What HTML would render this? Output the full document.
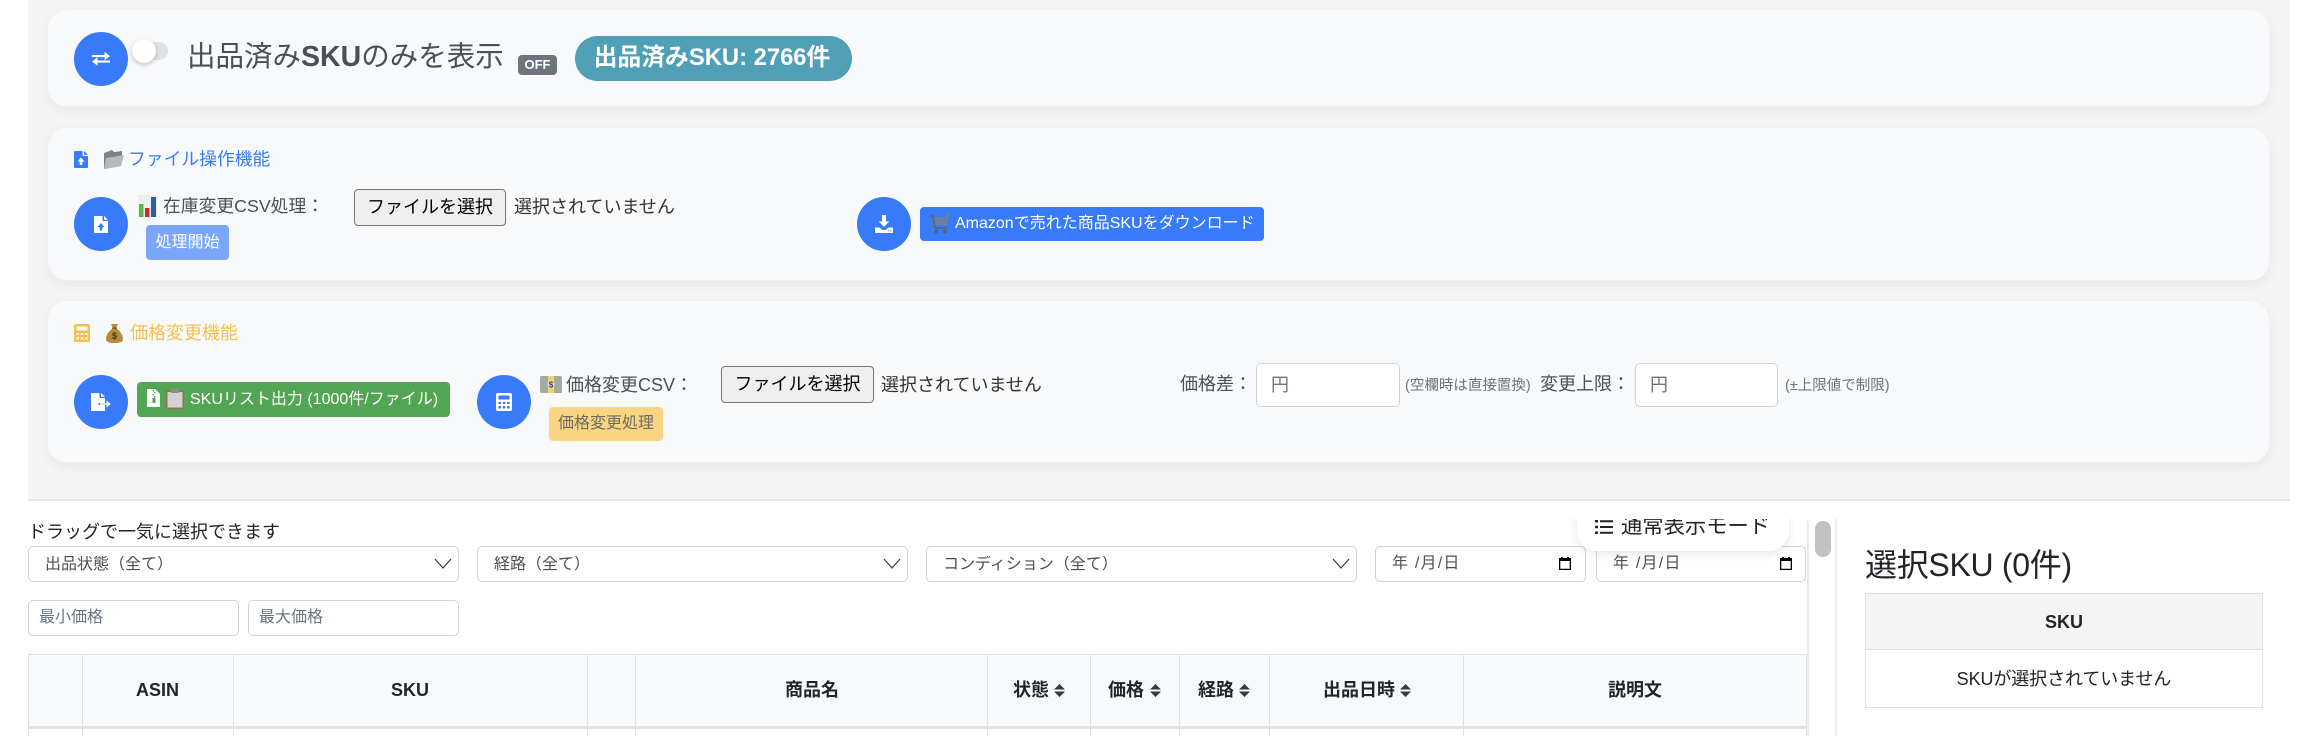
<!DOCTYPE html>
<html lang="ja"><head><meta charset="utf-8"><title>SKU</title>
<style>
*{box-sizing:border-box}
html,body{margin:0;padding:0;background:#fff;width:2318px;height:736px;overflow:hidden}
body{font-family:"Liberation Sans","Noto Sans CJK JP",sans-serif;color:#212529;position:relative}
.a{position:absolute;white-space:nowrap}
.bg{left:28px;top:0;width:2262px;height:501px;background:#f4f4f5;border-bottom:2px solid #e4e5e7}
.card{left:47px;width:2223px;background:#f8f9fb;border-radius:20px;border:1px solid #f0f1f3;box-shadow:0 4px 12px rgba(0,0,0,.05)}
.c{width:54px;height:54px;border-radius:50%;background:#387bfa}
.c svg,.ic{position:absolute}
.t{line-height:24px;height:24px;font-size:18px;color:#495057}
.fb{height:37px;background:#efefef;border:1px solid #767676;border-radius:4px;font:18px/35px "Liberation Sans","Noto Sans CJK JP",sans-serif;color:#000;padding:0;text-align:center}
.btn{border-radius:4px;color:#fff;font-size:16px;line-height:24px;text-align:center}
.inp{background:#fff;border:1px solid #ced4da;border-radius:5px;font:16px "Liberation Sans","Noto Sans CJK JP",sans-serif;color:#495057;outline:0}
.inp::placeholder{color:#6c757d;opacity:1}
.sm{font-size:14.500px;line-height:20px;color:#6c757d}
select.inp{appearance:none;-webkit-appearance:none;padding:0 0 0 16px;height:36px}
.tv{width:1px;top:654px;height:82px;background:#dee2e6}
.th{top:678px;line-height:24px;font-size:18px;font-weight:700;color:#212529}
</style></head><body>
<div class="a bg"></div>

<!-- card 1 -->
<div class="a card" style="top:9px;height:98px"></div>
<div class="a c" style="left:74px;top:32px"><svg style="left:18px;top:20px" width="18" height="14" viewBox="0 0 18 14" fill="#fff"><path d="M0 3.2h12.5V0L18 4.3l-5.500 4.200V5.300H0zM18 10.800H5.500V14L0 9.700l5.500-4.200v3.200H18z" transform="translate(0 -.2)"/></svg></div>
<div class="a" style="left:132px;top:42px;width:36px;height:18px;border-radius:9px;background:#dee2e6"></div>
<div class="a" style="left:132px;top:39px;width:24px;height:24px;border-radius:50%;background:#fff;box-shadow:0 2px 5px rgba(0,0,0,.22)"></div>
<div class="a" style="left:187px;top:38px;font-size:28.500px;line-height:38px;color:#495057">出品済み<b style="font-weight:700">SKU</b>のみを表示</div>
<div class="a" style="left:518px;top:55px;width:39px;height:20px;background:#6c757d;border-radius:4px;color:#fff;font-size:13px;font-weight:700;line-height:20px;text-align:center">OFF</div>
<div class="a" style="left:575px;top:36px;width:277px;height:45px;border-radius:23px;background:#4f9fb6;color:#fff;font-size:23.800px;font-weight:700;line-height:44px;text-align:center;padding-right:3px">出品済みSKU: 2766件</div>

<!-- card 2 -->
<div class="a card" style="top:127px;height:154px"></div>
<svg class="ic" style="left:74px;top:151px" width="14" height="17" viewBox="0 0 14 17"><path fill="#387bfa" d="M1 0h7.500v5H14v11a1 1 0 0 1-1 1H1a1 1 0 0 1-1-1V1a1 1 0 0 1 1-1zM10 0l4 3.800H10z"/><path fill="#fff" d="M7 6.500l3.500 4H8.300V14H5.700v-3.500H3.500z"/></svg>
<svg class="ic" style="left:102px;top:150px" width="22" height="19" viewBox="0 0 22 19"><path fill="#7d8288" d="M2 3l8-3 2 2 8-1v5L4 18l-2 1z"/><path fill="#b6babf" d="M4 8l18-3-3 11-15 3-2 0z"/></svg>
<div class="a t" style="left:128px;top:147px;color:#387bfa;font-size:17.800px">ファイル操作機能</div>

<div class="a c" style="left:74px;top:197px"><svg style="left:20px;top:19px" width="14" height="17" viewBox="0 0 14 17"><path fill="#fff" d="M0 0h8.500v5H14v12H0zM10 0l4 3.800H10z"/><path fill="#387bfa" d="M7 7l3.500 4H8.300v3.500H5.700V11H3.500z"/></svg></div>
<svg class="ic" style="left:138px;top:195px" width="19" height="22" viewBox="0 0 19 22"><rect width="19" height="22" fill="#eceded"/><rect x="1" y="9" width="4.500" height="13" fill="#5cb84a"/><rect x="7" y="13" width="4.500" height="9" fill="#c3322a"/><rect x="13" y="2" width="5" height="20" fill="#2b5ea8"/></svg>
<div class="a t" style="left:163px;top:194px;font-size:17.800px">在庫変更CSV処理：</div>
<button class="a fb" style="left:354px;top:189px;width:152px">ファイルを選択</button>
<div class="a t" style="left:514px;top:195px;color:#333">選択されていません</div>
<div class="a btn" style="left:146px;top:225px;width:83px;height:35px;background:#7aa7fb;line-height:35px">処理開始</div>

<div class="a c" style="left:857px;top:197px"><svg style="left:18px;top:18px" width="18" height="18" viewBox="0 0 18 18"><path fill="#fff" d="M7 0h4v6.500h3.200L9 12 3.800 6.500H7zM0 12.500h4.500L7.500 15h3l3-2.500H18V18H0z"/><path fill="#387bfa" d="M13 15.300h1.200v1H13zM15 15.300h1.200v1H15z"/></svg></div>
<div class="a btn" style="left:920px;top:207px;width:344px;height:34px;background:#387bfa;text-align:left;padding-left:35px;line-height:33px">Amazonで売れた商品SKUをダウンロード</div>
<svg class="ic" style="left:929px;top:213px" width="21" height="21" viewBox="0 0 21 21"><path fill="#6f7f9d" d="M3 4h14l2-4h2l-3 12H4z"/><path fill="none" stroke="#59636f" stroke-width="1.500" d="M1 3h3l2 12h12"/><circle cx="7" cy="18.500" r="2" fill="#59636f"/><circle cx="16" cy="18.500" r="2" fill="#59636f"/></svg>

<!-- card 3 -->
<div class="a card" style="top:300px;height:163px"></div>
<svg class="ic" style="left:74px;top:324px" width="16" height="18" viewBox="0 0 16 18"><path fill="#f6c04d" fill-rule="evenodd" d="M2 0h12a2 2 0 0 1 2 2v14a2 2 0 0 1-2 2H2a2 2 0 0 1-2-2V2a2 2 0 0 1 2-2zM2.500 2.500v4h11v-4zM2.500 9v2h2.500V9zM6.800 9v2h2.500V9zM11 9v2h2.500V9zM2.500 13v2.500h2.500V13zM6.800 13v2.500h2.500V13zM11 13v2.500h2.500V13z"/></svg>
<svg class="ic" style="left:106px;top:324px" width="17" height="19" viewBox="0 0 17 19"><path fill="#b58a3c" d="M5 0h7l-2 4c4 3 7 7 7 11 0 3-3 4-8.500 4S0 18 0 15c0-4 3-8 7-11z"/><path fill="#6b4b12" d="M6 3.500h5v1.200H6z"/><text x="8.500" y="15" font-size="9" font-weight="700" text-anchor="middle" fill="#4a3208" font-family="Liberation Sans">$</text></svg>
<div class="a t" style="left:130px;top:321px;color:#f6c04d">価格変更機能</div>

<div class="a c" style="left:74px;top:375px"><svg style="left:17px;top:18px" width="20" height="18" viewBox="0 0 20 18"><path fill="#fff" d="M0 0h8.500v5H14v5H7.500v2H14v6H0zM10 0l4 3.800H10z"/><path fill="#fff" d="M9 10.300h6.500V7.500L20 11l-4.500 3.500v-2.700H9z"/></svg></div>
<div class="a btn" style="left:137px;top:382px;width:313px;height:35px;background:#52a552;text-align:left;padding-left:53px;line-height:35px">SKUリスト出力 (1000件/ファイル)</div>
<svg class="ic" style="left:147px;top:389px" width="13" height="18" viewBox="0 0 13 18"><path fill="#fff" d="M0 0h8l5 5v13H0z"/><path fill="#52a552" d="M5.500 1h1.500v1.500H5.500zM7 3h1.500v1.500H7zM5.500 5H7v1.500H5.500zM7 7h1.500v1.500H7zM5.500 9H8.500v5H5.500z"/></svg>
<svg class="ic" style="left:166px;top:389px" width="18" height="20" viewBox="0 0 18 20"><rect y="1.500" width="18" height="18.500" rx="1" fill="#93724e"/><rect x="1.500" y="3" width="15" height="15.500" fill="#d2d2d2"/><rect x="5" y="0" width="8" height="4" rx="1" fill="#8a8d90"/></svg>

<div class="a c" style="left:477px;top:375px"><svg style="left:19px;top:18px" width="16" height="18" viewBox="0 0 16 18"><path fill="#fff" fill-rule="evenodd" d="M2 0h12a2 2 0 0 1 2 2v14a2 2 0 0 1-2 2H2a2 2 0 0 1-2-2V2a2 2 0 0 1 2-2zM2.500 2.500v4h11v-4zM2.500 9v2h2.500V9zM6.800 9v2h2.500V9zM11 9v2h2.500V9zM2.500 13v2.500h2.500V13zM6.800 13v2.500h2.500V13zM11 13v2.500h2.500V13z"/></svg></div>
<svg class="ic" style="left:540px;top:376px" width="22" height="17" viewBox="0 0 22 17"><rect width="22" height="17" rx="1.500" fill="#a4ab9f"/><rect x="8" width="6" height="17" fill="#f1d56a"/><circle cx="11" cy="8.500" r="3.600" fill="#d9ddd2"/><text x="11" y="11.500" font-size="8" font-weight="700" text-anchor="middle" fill="#444" font-family="Liberation Sans">$</text></svg>
<div class="a t" style="left:566px;top:373px">価格変更CSV：</div>
<button class="a fb" style="left:721px;top:366px;width:153px">ファイルを選択</button>
<div class="a t" style="left:881px;top:373px;color:#333">選択されていません</div>
<div class="a btn" style="left:549px;top:407px;width:114px;height:34px;background:#f7d582;color:#6e6c62;line-height:34px">価格変更処理</div>

<div class="a t" style="left:1180px;top:372px">価格差：</div>
<input class="a inp" style="left:1256px;top:363px;width:144px;height:44px;padding:0 14px;font-size:18px" placeholder="円">
<div class="a sm" style="left:1405px;top:376px">(空欄時は直接置換)</div>
<div class="a t" style="left:1540px;top:372px">変更上限：</div>
<input class="a inp" style="left:1635px;top:363px;width:143px;height:44px;padding:0 14px;font-size:18px" placeholder="円">
<div class="a sm" style="left:1785px;top:376px">(±上限値で制限)</div>

<!-- filters -->
<div class="a" style="left:28px;top:520px;font-size:18px;line-height:24px">ドラッグで一気に選択できます</div>
<select class="a inp" style="left:28px;top:546px;width:431px"><option>出品状態（全て）</option></select>
<svg class="ic" style="left:434px;top:557px" width="18" height="14" viewBox="0 0 18 14"><path fill="none" stroke="#343a40" stroke-width="1.200" d="M1 2l8 9 8-9"/></svg>
<select class="a inp" style="left:477px;top:546px;width:431px"><option>経路（全て）</option></select>
<svg class="ic" style="left:883px;top:557px" width="18" height="14" viewBox="0 0 18 14"><path fill="none" stroke="#343a40" stroke-width="1.200" d="M1 2l8 9 8-9"/></svg>
<select class="a inp" style="left:926px;top:546px;width:431px"><option>コンディション（全て）</option></select>
<svg class="ic" style="left:1332px;top:557px" width="18" height="14" viewBox="0 0 18 14"><path fill="none" stroke="#343a40" stroke-width="1.200" d="M1 2l8 9 8-9"/></svg>

<div class="a inp" style="left:1375px;top:546px;width:211px;height:36px;line-height:33px;padding-left:16px;letter-spacing:1.200px">年 /月/日</div>
<svg class="ic" style="left:1559px;top:557px" width="12" height="13" viewBox="0 0 12 13"><path fill="#000" fill-rule="evenodd" d="M0 1h2V0h2v1h4V0h2v1h2v12H0zM1.300 4v7.700h9.400V4z"/></svg>
<div class="a inp" style="left:1596px;top:546px;width:210px;height:36px;line-height:33px;padding-left:16px;letter-spacing:1.200px">年 /月/日</div>
<svg class="ic" style="left:1780px;top:557px" width="12" height="13" viewBox="0 0 12 13"><path fill="#000" fill-rule="evenodd" d="M0 1h2V0h2v1h4V0h2v1h2v12H0zM1.300 4v7.700h9.400V4z"/></svg>

<input class="a inp" style="left:28px;top:600px;width:211px;height:36px;padding:0 10px" placeholder="最小価格">
<input class="a inp" style="left:248px;top:600px;width:211px;height:36px;padding:0 10px" placeholder="最大価格">

<!-- floating mode button (clipped on top) -->
<div class="a" style="left:1570px;top:519px;width:226px;height:50px;overflow:hidden">
  <div class="a" style="left:7px;top:-26px;width:212px;height:58px;background:#fff;border-radius:20px;box-shadow:0 3px 10px rgba(0,0,0,.1)"></div>
  <svg class="ic" style="left:25px;top:1px" width="18" height="14" viewBox="0 0 18 14"><path fill="#212529" d="M0 0h3v2.500H0zM5 .2h13v2H5zM0 5.700h3v2.500H0zM5 6h13v2H5zM0 11.500h3V14H0zM5 11.800h13v2H5z"/></svg>
  <div class="a" style="left:51px;top:-5px;font-size:21.300px;line-height:24px;color:#212529">通常表示モード</div>
</div>

<!-- table -->
<div class="a" style="left:28px;top:654px;width:1778px;height:72px;background:#f8f9fa;border-top:1px solid #dee2e6"></div>
<div class="a" style="left:28px;top:726px;width:1778px;height:3px;background:#dee2e6"></div>
<div class="a tv" style="left:28px"></div><div class="a tv" style="left:82px"></div><div class="a tv" style="left:233px"></div><div class="a tv" style="left:587px"></div><div class="a tv" style="left:635px"></div><div class="a tv" style="left:987px"></div><div class="a tv" style="left:1090px"></div><div class="a tv" style="left:1179px"></div><div class="a tv" style="left:1269px"></div><div class="a tv" style="left:1463px"></div><div class="a tv" style="left:1806px"></div>
<div class="a th" style="left:136px">ASIN</div>
<div class="a th" style="left:391px">SKU</div>
<div class="a th" style="left:785px">商品名</div>
<div class="a th" style="left:1013px">状態</div>
<div class="a th" style="left:1108px">価格</div>
<div class="a th" style="left:1198px">経路</div>
<div class="a th" style="left:1323px">出品日時</div>
<div class="a th" style="left:1608px">説明文</div>
<svg class="ic" style="left:1054px;top:684px" width="11" height="13" viewBox="0 0 11 13"><path fill="#343a40" d="M5.500 0L11 5.500H0zM0 7.500h11L5.500 13z"/></svg>
<svg class="ic" style="left:1150px;top:684px" width="11" height="13" viewBox="0 0 11 13"><path fill="#343a40" d="M5.500 0L11 5.500H0zM0 7.500h11L5.500 13z"/></svg>
<svg class="ic" style="left:1239px;top:684px" width="11" height="13" viewBox="0 0 11 13"><path fill="#343a40" d="M5.500 0L11 5.500H0zM0 7.500h11L5.500 13z"/></svg>
<svg class="ic" style="left:1400px;top:684px" width="11" height="13" viewBox="0 0 11 13"><path fill="#343a40" d="M5.500 0L11 5.500H0zM0 7.500h11L5.500 13z"/></svg>

<!-- scrollbar -->
<div class="a" style="left:1807px;top:519px;width:30px;height:217px;background:#fff;border-left:2px solid #eceded;border-right:2px solid #eceded"></div>
<div class="a" style="left:1815px;top:521px;width:16px;height:36px;border-radius:8px;background:#c1c1c1"></div>

<!-- selected -->
<div class="a" style="left:1865px;top:545px;font-size:32px;line-height:40px;color:#212529;letter-spacing:-.3px">選択SKU (0件)</div>
<div class="a" style="left:1865px;top:593px;width:398px;height:115px;border:1px solid #dee2e6"></div>
<div class="a" style="left:1866px;top:594px;width:396px;height:56px;background:#f4f4f5;border-bottom:1px solid #dee2e6;font-size:18px;font-weight:700;line-height:56px;text-align:center">SKU</div>
<div class="a" style="left:1866px;top:667px;width:396px;font-size:18px;line-height:24px;text-align:center;letter-spacing:-.1px">SKUが選択されていません</div>
</body></html>
